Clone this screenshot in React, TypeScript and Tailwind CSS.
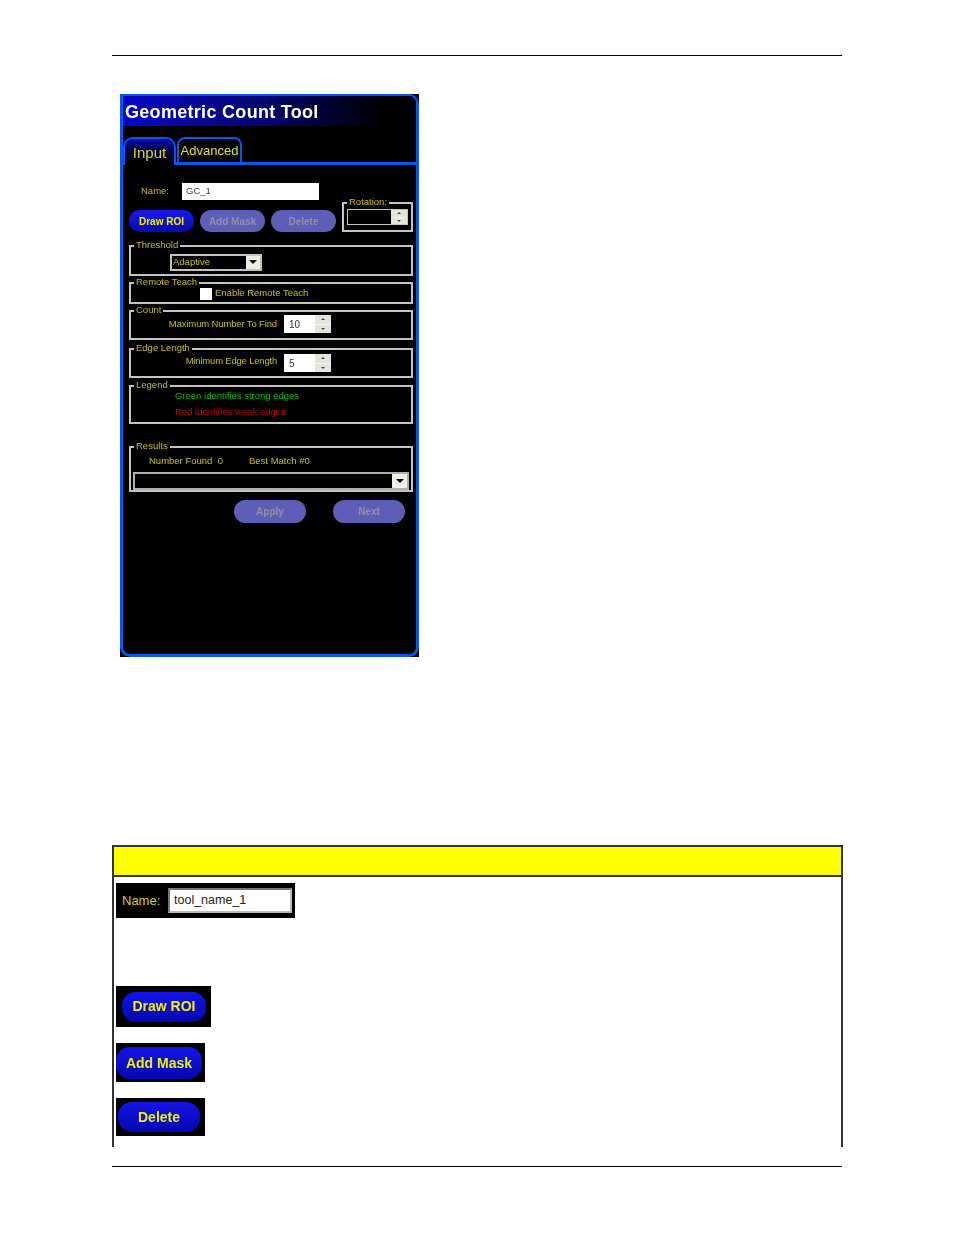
import React from "react";

const ui = "font-['Liberation_Sans',sans-serif]";

function Group({ label, className = "", children }: { label: string; className?: string; children?: React.ReactNode }) {
  return (
    <div className={`relative border-2 border-[#c4c4bc] ${className}`}>
      <span className="absolute left-[3px] top-[-7px] bg-black px-[2px] text-[9.5px] leading-[10px] text-[#c9c000] whitespace-nowrap">{label}</span>
      {children}
    </div>
  );
}

function Pill({ label, on, className = "" }: { label: string; on?: boolean; className?: string }) {
  return (
    <div className={`flex items-center justify-center rounded-full text-[10px] font-bold ${on ? "bg-gradient-to-b from-[#1a1af0] to-[#0808b0] text-[#f0f000]" : "bg-[#5f5db8] text-[#8f8fa8]"} ${className}`}>
      {label}
    </div>
  );
}

function SpinArrows() {
  return (
    <div className="flex h-full w-[16px] flex-col gap-px bg-[#f2f2ea]">
      <div className="flex flex-1 items-center justify-center bg-[#e4e4da]"><div className="h-0 w-0 border-x-[2px] border-b-[2px] border-x-transparent border-b-[#444]" /></div>
      <div className="flex flex-1 items-center justify-center bg-[#e4e4da]"><div className="h-0 w-0 border-x-[2px] border-t-[2px] border-x-transparent border-t-[#444]" /></div>
    </div>
  );
}

function Spin({ value, className = "" }: { value: string; className?: string }) {
  return (
    <div className={`flex h-[18px] w-[47px] items-center justify-between bg-white pl-[5px] text-[10px] text-[#333] ${className}`}>
      <span>{value}</span>
      <SpinArrows />
    </div>
  );
}

function DropBtn({ className = "" }: { className?: string }) {
  return (
    <div className={`flex items-center justify-center bg-[#eeeee6] ${className}`}>
      <div className="h-0 w-0 border-x-[4px] border-t-[4px] border-x-transparent border-t-black" />
    </div>
  );
}

function Panel() {
  return (
    <div className="ml-[8px] h-[563px] w-[299px] bg-black">
      <div className={`${ui} flex h-full w-full flex-col overflow-hidden rounded-[10px] rounded-tl-none border-x-[3px] border-b-[3px] border-t-[2px] border-[#0a55ee] bg-black blur-[0.35px]`}>
        <div className="flex h-[30px] shrink-0 items-center bg-gradient-to-r from-[#0808c8] via-[#06066a] to-black pl-[2px] pt-[2px] text-[18px] font-bold tracking-[0.3px] text-white">
          Geometric Count Tool
        </div>
        <div className="mt-[11px] flex h-[28px] shrink-0 items-end border-b-[3px] border-[#0a55ee]">
          <div className="mb-[-3px] flex h-[28px] w-[53px] items-center justify-center rounded-t-[10px] border-x-2 border-t-2 border-[#0a55ee] bg-gradient-to-b from-[#0808b0] to-black pt-[3px] text-[15px] text-[#e0d800]">Input</div>
          <div className="ml-px flex h-[25px] w-[65px] items-center justify-center whitespace-nowrap rounded-t-[8px] border-x-2 border-t-2 border-[#0a55ee] pt-px text-[13px] text-[#e8e000]">Advanced</div>
        </div>

        <div className="flex flex-col pl-[6px] pr-[3px] text-[9.5px] text-[#c9c000]">
          <div className="mt-[18px] flex h-[49px]">
            <div className="w-[213px]">
              <div className="flex h-[17px] items-center">
                <span className="ml-[12px] w-[41px]">Name:</span>
                <div className="flex h-[17px] w-[137px] items-center bg-white pl-[4px] text-[#444]">GC_1</div>
              </div>
              <div className="mt-[10px] flex gap-[6px]">
                <Pill on label="Draw ROI" className="h-[22px] w-[65px]" />
                <Pill label="Add Mask" className="h-[22px] w-[65px]" />
                <Pill label="Delete" className="h-[22px] w-[65px]" />
              </div>
            </div>
            <Group label="Rotation:" className="mt-[19px] flex h-[30px] w-[71px] items-center justify-center">
              <div className="flex h-[16px] w-[61px] justify-end border border-[#c4c4bc] bg-black"><SpinArrows /></div>
            </Group>
          </div>

          <Group label="Threshold" className="mt-[13px] flex h-[31px] items-center pl-[39px] pt-[3px]">
            <div className="flex h-[17px] w-[92px] items-center justify-between border-2 border-[#c4c4bc] pl-px">
              <span>Adaptive</span>
              <DropBtn className="h-full w-[14px]" />
            </div>
          </Group>

          <Group label="Remote Teach" className="mt-[6px] flex h-[22px] items-center pl-[69px] pt-px">
            <div className="mr-[3px] h-[12px] w-[12px] bg-white" />
            <span>Enable Remote Teach</span>
          </Group>

          <Group label="Count" className="mt-[6px] flex h-[30px] items-center justify-end pb-[2px] pr-[80px]">
            <span className="mr-[7px] tracking-[-0.14px]">Maximum Number To Find</span>
            <Spin value="10" />
          </Group>

          <Group label="Edge Length" className="mt-[8px] flex h-[30px] items-center justify-end pr-[80px]">
            <span className="mb-[3px] mr-[7px] tracking-[-0.2px]">Minimum Edge Length</span>
            <Spin value="5" />
          </Group>

          <Group label="Legend" className="mt-[7px] flex h-[39px] flex-col pl-[44px] pt-[2px]">
            <span className="leading-[13px] text-[#00c000]">Green identifies strong edges</span>
            <span className="mt-[3px] leading-[13px] text-[#c00000]">Red identifies weak edges</span>
          </Group>

          <Group label="Results" className="mt-[22px] flex h-[46px] flex-col">
            <div className="flex h-[24px] shrink-0 items-center pl-[18px] pt-[2px]">
              <span className="w-[100px]">Number Found&nbsp; 0</span>
              <span>Best Match #0</span>
            </div>
            <div className="mx-[2px] flex h-[18px] justify-end border-2 border-[#b0b0a8]">
              <DropBtn className="h-full w-[15px]" />
            </div>
          </Group>

          <div className="mt-[8px] flex justify-end gap-[27px] pr-[8px]">
            <Pill label="Apply" className="h-[23px] w-[72px]" />
            <Pill label="Next" className="h-[23px] w-[72px]" />
          </div>
        </div>
      </div>
    </div>
  );
}

function Shot({ className = "", children }: { className?: string; children: React.ReactNode }) {
  return <div className={`flex items-center bg-black ${className}`}>{children}</div>;
}

function BigPill({ label, className = "" }: { label: string; className?: string }) {
  return (
    <div className={`flex items-center justify-center rounded-[14px] bg-gradient-to-b from-[#1414e8] to-[#0606b0] font-['Liberation_Sans',sans-serif] text-[14px] font-bold text-[#f0f000] blur-[0.25px] ${className}`}>
      {label}
    </div>
  );
}

export default function App() {
  return (
    <div className="h-[1235px] w-[954px] bg-white px-[112px] pt-[55px]">
      <div className="h-px w-[730px] bg-black" />
      <div className="mt-[38px]"><Panel /></div>

      <div className="mt-[188px] flex h-[302px] w-[731px] flex-col border-x-2 border-t-2 border-[#333]">
        <div className="h-[30px] shrink-0 border-b-2 border-[#333] bg-[#ffff00]" />
        <div className="flex flex-col items-start pl-[2px]">
          <Shot className="mt-[6px] h-[35px] w-[179px] pl-[6px]">
            <span className="w-[46px] font-['Liberation_Sans',sans-serif] text-[13px] text-[#d8d000]">Name:</span>
            <div className="flex h-[25px] w-[124px] items-center border-2 border-[#bbb] border-l-[#777] border-t-[#777] bg-white pl-[4px] font-['Liberation_Sans',sans-serif] text-[12.5px] text-[#222]">tool_name_1</div>
          </Shot>
          <Shot className="mt-[68px] h-[41px] w-[95px] pl-[6px]">
            <BigPill label="Draw ROI" className="h-[30px] w-[84px]" />
          </Shot>
          <Shot className="mt-[16px] h-[39px] w-[89px]">
            <BigPill label="Add Mask" className="h-[32px] w-[86px] pt-px" />
          </Shot>
          <Shot className="mt-[16px] h-[38px] w-[89px] pl-[2px]">
            <BigPill label="Delete" className="h-[30px] w-[82px]" />
          </Shot>
        </div>
      </div>

      <div className="mt-[19px] h-px w-[730px] bg-black" />
    </div>
  );
}
